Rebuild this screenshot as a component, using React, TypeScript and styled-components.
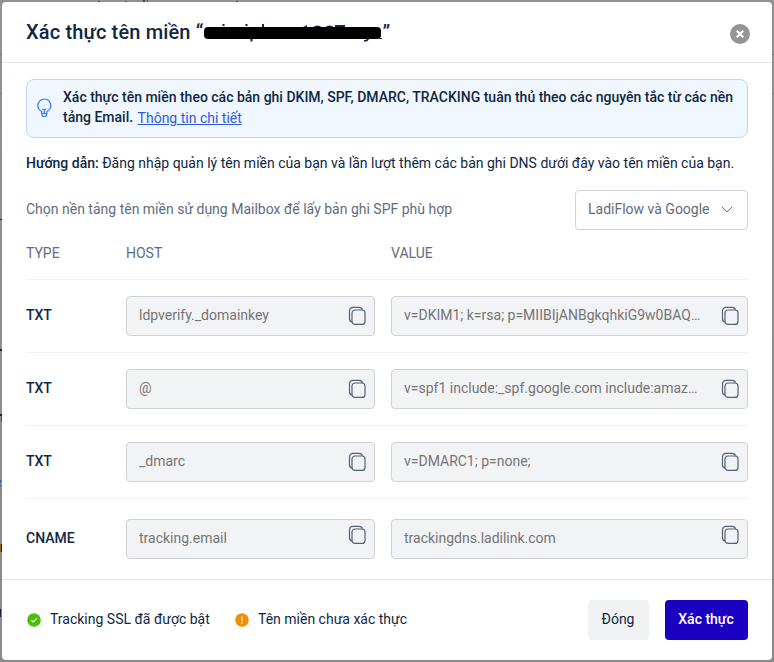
import React from "react";
import styled, { createGlobalStyle } from "styled-components";

const GlobalStyle = createGlobalStyle`
  * { box-sizing: border-box; }
  html, body { margin: 0; height: 100%; }
  body {
    background: #929292;
    font-family: Roboto, "Liberation Sans", sans-serif;
    font-size: 14px;
    line-height: 20px;
    color: #0f2744;
    overflow: hidden;
  }
`;

const Backdrop = styled.div`
  width: 774px;
  height: 662px;
  padding: 2px;
  position: relative;
  background: linear-gradient(#929292, #8a8a8a);
`;

const Speck = styled.i<{ $x: number; $y: number; $w: number; $h: number; $c: string }>`
  position: absolute;
  left: ${(p) => p.$x}px;
  top: ${(p) => p.$y}px;
  width: ${(p) => p.$w}px;
  height: ${(p) => p.$h}px;
  background: ${(p) => p.$c};
`;

const Dialog = styled.section`
  height: 658px;
  position: relative;
  display: flex;
  flex-direction: column;
  background: #fff;
  border-radius: 4px;
`;

const Header = styled.header`
  height: 61px;
  padding: 0 22px 0 24px;
  display: flex;
  align-items: center;
  justify-content: space-between;
  border-bottom: 1px solid #e6e6e8;
`;

const Title = styled.h1`
  margin: 0;
  display: flex;
  font-size: 20px;
  line-height: 28px;
  font-weight: 500;
  letter-spacing: 0.15px;
  white-space: pre;
`;

const CloseButton = styled.button`
  width: 20px;
  height: 20px;
  margin-top: 4px;
  padding: 0;
  border: 0;
  background: none;
  display: flex;
`;

const Body = styled.main`
  padding: 16px 24px 0;
  flex: 1;
`;

const Notice = styled.div`
  height: 59px;
  padding: 7px 11px 0 10px;
  display: flex;
  gap: 11px;
  background: #f0f7ff;
  border: 1px solid #bfd5fb;
  border-radius: 8px;
  font-weight: 500;
`;

const BulbIcon = styled.svg`
  flex: none;
  margin-top: 11px;
`;

const Link = styled.a`
  margin-left: 1px;
  vertical-align: -1px;
  line-height: 16px;
  color: #2f5be0;
  font-weight: 400;
  text-decoration: underline;
`;

const Guide = styled.p`
  margin: 15px 0 0;
  white-space: nowrap;
  b { font-weight: 500; }
`;

const PlatformRow = styled.div`
  height: 40px;
  margin-top: 17px;
  display: flex;
  align-items: center;
  justify-content: space-between;
  color: #5f6c80;
`;

const PlatformLabel = styled.span`
  padding-bottom: 2px;
`;

const Select = styled.button`
  width: 173px;
  height: 40px;
  padding: 0 14px 2px 12px;
  display: flex;
  align-items: center;
  justify-content: space-between;
  font: inherit;
  color: #5f6c80;
  background: #fff;
  border: 1px solid #cfd3d9;
  border-radius: 4px;
`;

const Row = styled.div<{ $height: number; $last?: boolean }>`
  height: ${(p) => p.$height}px;
  display: grid;
  grid-template-columns: 84px 249px 357px;
  column-gap: 16px;
  align-items: center;
  border-bottom: ${(p) => (p.$last ? "0" : "1px solid #f1f2f4")};
`;

const HeadRow = styled(Row)`
  color: #5f6c80;
  padding-bottom: 4px;
`;

const TypeLabel = styled.span`
  font-weight: 500;
  padding-bottom: 2px;
`;

const Field = styled.div<{ $raised?: boolean }>`
  height: 40px;
  padding: 0 8px 0 12px;
  display: flex;
  align-items: center;
  justify-content: space-between;
  background: #f2f3f5;
  border: 1px solid #cfd3d9;
  border-radius: 4px;
  color: #757575;
  svg { flex: none; margin-top: ${(p) => (p.$raised ? "-8px" : "0")}; }
`;

const FieldText = styled.span`
  max-width: 298px;
  padding-bottom: 2px;
  overflow: hidden;
  text-overflow: ellipsis;
  white-space: nowrap;
`;

const Footer = styled.footer`
  height: 81px;
  padding: 0 24px;
  display: flex;
  align-items: center;
  border-top: 1px solid #e6e6e8;
`;

const Status = styled.div<{ $width: number }>`
  width: ${(p) => p.$width}px;
  padding-left: 1px;
  display: flex;
  align-items: center;
  gap: 9px;
  white-space: nowrap;
  svg { flex: none; }
  span { padding-bottom: 2px; }
`;

const Actions = styled.div`
  margin-left: auto;
  display: flex;
  gap: 16px;
`;

const Button = styled.button<{ $primary?: boolean }>`
  width: ${(p) => (p.$primary ? 83 : 61)}px;
  height: 40px;
  padding: 0 1px 2px 0;
  border: 0;
  border-radius: 4px;
  font: inherit;
  font-weight: ${(p) => (p.$primary ? 500 : 400)};
  color: ${(p) => (p.$primary ? "#fff" : "#0f2744")};
  background: ${(p) => (p.$primary ? "#1c00c2" : "#f1f2f4")};
`;

const CopyIcon = () => (
  <svg width="18" height="20" viewBox="0 0 18 20" fill="none" stroke="#51617a" strokeWidth="1.2">
    <rect x="4" y="4" width="13" height="14.4" rx="3" />
    <path d="M4 16C2.400 15.700 1.500 14.600 1.500 13V5C1.500 2.700 2.800 1.400 5.100 1.400h6c1.700 0 2.900.8 3.400 2.300" />
  </svg>
);

const RedactedName = () => (
  <svg width="179" height="28" viewBox="0 0 179 28">
    <g fill="#0f2744">
      <path d="M18.500 6h2v2h-2zM41.500 6h2v2h-2zM58 6h2v4h-2zM46.500 20h2v3.500h-2zM160 23.500v-1.500c2 0 3-.5 3.500-2h2c-1 2.800-2.500 4-5.500 3.500zM98 9.500l5-2.500v3z" />
      <path d="M109 10c1-3.500 8-3.500 9 0zM121 10c1-3.500 8-3.500 9 0zM131 7h10v3h-10zM175 20h3v1h-3z" />
    </g>
    <rect x="0" y="9" width="177" height="12" rx="4" fill="#000" />
  </svg>
);

const records = [
  { type: "TXT", host: "ldpverify._domainkey", value: "v=DKIM1; k=rsa; p=MIIBIjANBgkqhkiG9w0BAQEFAAOCAQ8A" },
  { type: "TXT", host: "@", value: "v=spf1 include:_spf.google.com include:amazonses.com ~all" },
  { type: "TXT", host: "_dmarc", value: "v=DMARC1; p=none;" },
  { type: "CNAME", host: "tracking.email", value: "trackingdns.ladilink.com" },
];

const specks: [number, number, number, number, string][] = [
  [98, 1, 2, 1, "#444"], [125, 1, 2, 1, "#555"], [143, 0, 2, 2, "#444"], [147, 0, 1, 2, "#357"], [236, 1, 2, 1, "#444"],
  [0, 54, 2, 1, "#777"], [0, 73, 1, 5, "#7f9ca8"], [0, 93, 2, 1, "#777"], [772, 54, 2, 1, "#777"], [772, 93, 2, 1, "#777"],
  [0, 219, 2, 1, "#222"], [0, 349, 2, 2, "#152238"], [0, 414, 2, 2, "#152238"], [1, 416, 1, 6, "#6b4a35"],
  [0, 480, 1, 3, "#1f5fa0"], [0, 485, 1, 1, "#1f5fa0"], [0, 544, 1, 8, "#a45a10"], [1, 544, 1, 8, "#152040"], [0, 609, 1, 8, "#101850"],
];

export default function App() {
  return (
    <>
      <GlobalStyle />
      <Backdrop>
        {specks.map(([x, y, w, h, c], i) => (
          <Speck key={i} $x={x} $y={y} $w={w} $h={h} $c={c} />
        ))}
        <Dialog>
          <Header>
            <Title>Xác thực tên miền “<RedactedName />”</Title>
            <CloseButton aria-label="Đóng">
              <svg width="20" height="20" viewBox="0 0 20 20">
                <circle cx="10" cy="10" r="10" fill="#959595" />
                <path d="M6.800 6.800l6.400 6.400m0-6.400l-6.400 6.400" stroke="#fff" strokeWidth="2.200" />
              </svg>
            </CloseButton>
          </Header>
          <Body>
            <Notice>
              <BulbIcon width="15" height="20" viewBox="0 0 15 20" fill="none" stroke="#3478f6" strokeWidth="1.200">
                <path d="M4.700 13.500C2.300 12.300.8 10.200.8 7.500a6.500 6.500 0 0 1 13 0c0 2.700-1.500 4.800-3.900 6v2H4.700zM5 15.500v1.200c0 1.100.8 1.800 2.300 1.800s2.300-.7 2.300-1.800v-1.200M5.200 11l2.100 1 2.100-1M7.300 12v3" />
              </BulbIcon>
              <span>
                Xác thực tên miền theo các bản ghi DKIM, SPF, DMARC, TRACKING tuân thủ theo các nguyên tắc từ các nền tảng Email. <Link>Thông tin chi tiết</Link>
              </span>
            </Notice>
            <Guide>
              <b>Hướng dẫn:</b> Đăng nhập quản lý tên miền của bạn và lần lượt thêm các bản ghi DNS dưới đây vào tên miền của bạn.
            </Guide>
            <PlatformRow>
              <PlatformLabel>Chọn nền tảng tên miền sử dụng Mailbox để lấy bản ghi SPF phù hợp</PlatformLabel>
              <Select>
                LadiFlow và Google
                <svg width="12" height="7" viewBox="0 0 12 7" fill="none" stroke="#5f6c80">
                  <path d="M.8.8L6 5.800 11.200.8" />
                </svg>
              </Select>
            </PlatformRow>
            <HeadRow $height={50}>
              <span>TYPE</span>
              <span>HOST</span>
              <span>VALUE</span>
            </HeadRow>
            {records.map((r, i) => {
              const last = i === records.length - 1;
              return (
                <Row key={i} $height={last ? 80 : 73} $last={last}>
                  <TypeLabel>{r.type}</TypeLabel>
                  <Field $raised={last}><FieldText>{r.host}</FieldText><CopyIcon /></Field>
                  <Field $raised={last}><FieldText>{r.value}</FieldText><CopyIcon /></Field>
                </Row>
              );
            })}
          </Body>
          <Footer>
            <Status $width={208}>
              <svg width="14" height="14" viewBox="0 0 14 14">
                <circle cx="7" cy="7" r="6.800" fill="#4bbf09" />
                <path d="M4.300 7.100l1.900 1.800 3.600-3.600" fill="none" stroke="#fff" strokeWidth="1.200" />
              </svg>
              <span>Tracking SSL đã được bật</span>
            </Status>
            <Status $width={190}>
              <svg width="14" height="14" viewBox="0 0 14 14">
                <circle cx="7" cy="7" r="6.800" fill="#f29100" />
                <path d="M7 3.500v4.700M7 9.200v1.500" stroke="#ffe8c0" strokeWidth="1.400" />
              </svg>
              <span>Tên miền chưa xác thực</span>
            </Status>
            <Actions>
              <Button>Đóng</Button>
              <Button $primary>Xác thực</Button>
            </Actions>
          </Footer>
        </Dialog>
      </Backdrop>
    </>
  );
}
